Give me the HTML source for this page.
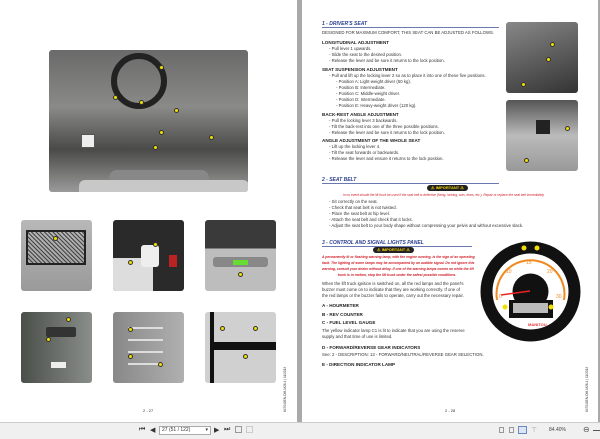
<!DOCTYPE html>
<html><head><meta charset="utf-8"><style>
*{margin:0;padding:0;box-sizing:border-box}
body{width:600px;height:439px;background:#a9a9a9;position:relative;overflow:hidden;font-family:"Liberation Sans",sans-serif}
.pg{position:absolute;background:#fff;top:0;height:422px}
.a{position:absolute;white-space:nowrap}
.ph{position:absolute;border-radius:3px;overflow:hidden}
.t{position:absolute;font-size:4.3px;color:#333;white-space:nowrap}
.h{position:absolute;font-size:4.6px;font-weight:bold;color:#222;white-space:nowrap}
.sec{position:absolute;font-size:5px;font-weight:bold;font-style:italic;color:#2b3f8f;white-space:nowrap}
.red{position:absolute;font-size:3.4px;color:#d0202a;font-style:italic;white-space:nowrap;text-align:center}
.imp{position:absolute;background:#222;color:#f5d000;font-size:4px;font-weight:bold;border-radius:3px;padding:0 4px;height:6px;line-height:6px}
.dot{position:absolute;width:5px;height:5px;border-radius:50%;background:#f3e000;border:1px solid #333}
.tb{position:absolute;top:422px;left:0;width:600px;height:17px;background:#f0f0f0;border-top:1px solid #ccc}
</style></head><body>
<div class="pg" style="left:0;width:297px"></div>
<div class="pg" style="left:302px;width:296px"></div>

<div class="ph" style="left:49px;top:50px;width:199px;height:142px;background:linear-gradient(180deg,#6a6a6a 0%,#8a8a88 40%,#4a4a48 70%,#9a9a9a 100%)">
 <div class="a" style="left:62px;top:3px;width:56px;height:56px;border-radius:50%;border:6px solid #222"></div>
 <div class="a" style="left:60px;top:120px;width:100px;height:30px;background:#888;border-radius:8px"></div>
 <div class="a" style="left:30px;top:130px;width:170px;height:20px;background:#c8c8c8;border-radius:6px"></div>
 <div class="a" style="left:32px;top:84px;width:14px;height:14px;background:#eee;border:1px solid #555"></div>
 <div class="dot" style="left:110px;top:15px"></div><div class="dot" style="left:90px;top:50px"></div><div class="dot" style="left:125px;top:58px"></div><div class="dot" style="left:160px;top:85px"></div><div class="dot" style="left:104px;top:95px"></div><div class="dot" style="left:64px;top:45px"></div><div class="dot" style="left:110px;top:80px"></div>
</div>
<div class="ph" style="left:21px;top:220px;width:71px;height:71px;background:linear-gradient(#b8b8b8,#9a9a9a)"><div class="a" style="left:5px;top:10px;width:60px;height:35px;border:2px solid #222;background:repeating-linear-gradient(45deg,#444 0 1px,transparent 1px 3px)"></div><div class="dot" style="left:32px;top:16px"></div></div>
<div class="ph" style="left:113px;top:220px;width:71px;height:71px;background:#2a2a2a"><div class="a" style="left:0;top:38px;width:40px;height:33px;background:#ddd"></div><div class="a" style="left:28px;top:25px;width:18px;height:22px;background:#eee;border-radius:3px"></div><div class="a" style="left:56px;top:35px;width:8px;height:12px;background:#b22"></div><div class="dot" style="left:40px;top:22px"></div><div class="dot" style="left:15px;top:40px"></div></div>
<div class="ph" style="left:205px;top:220px;width:71px;height:71px;background:linear-gradient(#3a3a3a 0 40%,#bdbdbd 40%)"><div class="a" style="left:8px;top:37px;width:55px;height:10px;background:#888;border-radius:3px"></div><div class="a" style="left:28px;top:40px;width:15px;height:5px;background:#6d3"></div><div class="dot" style="left:33px;top:52px"></div></div>
<div class="ph" style="left:21px;top:312px;width:71px;height:71px;background:linear-gradient(90deg,#4a4f4a,#8a8e8a)"><div class="a" style="left:25px;top:15px;width:30px;height:10px;background:#333;border-radius:2px"></div><div class="a" style="left:30px;top:50px;width:15px;height:6px;background:#eee"></div><div class="dot" style="left:45px;top:5px"></div><div class="dot" style="left:25px;top:25px"></div></div>
<div class="ph" style="left:113px;top:312px;width:71px;height:71px;background:linear-gradient(90deg,#888,#b0b0b0)"><div class="a" style="left:15px;top:15px;width:35px;height:2px;background:#ddd;box-shadow:0 12px #ddd,0 24px #ddd,0 36px #ddd"></div><div class="dot" style="left:15px;top:15px"></div><div class="dot" style="left:15px;top:42px"></div><div class="dot" style="left:45px;top:50px"></div></div>
<div class="ph" style="left:205px;top:312px;width:71px;height:71px;background:#d0d0d0"><div class="a" style="left:5px;top:0;width:4px;height:71px;background:#111"></div><div class="a" style="left:5px;top:30px;width:66px;height:8px;background:#111"></div><div class="dot" style="left:15px;top:14px"></div><div class="dot" style="left:48px;top:14px"></div><div class="dot" style="left:38px;top:42px"></div></div>
<div class="t" style="left:143px;top:408px;font-size:4px">2 - 27</div>
<div class="t" style="left:283px;top:412px;font-size:3.2px;transform:rotate(-90deg);transform-origin:0 0">647040EN-OM-M26-4 | 11/2019</div>

<div class="sec" style="left:322px;top:21px">1 - DRIVER'S SEAT</div>
<div class="a" style="left:322px;top:27px;width:177px;height:1px;background:#6a7ab0"></div>
<div class="t" style="left:322px;top:30px">DESIGNED FOR MAXIMUM COMFORT, THIS SEAT CAN BE ADJUSTED AS FOLLOWS.</div>
<div class="h" style="left:322px;top:40px">LONGITUDINAL ADJUSTMENT</div>
<div class="t" style="left:329px;top:46px">- Pull lever 1 upwards.</div>
<div class="t" style="left:329px;top:52px">- Slide the seat to the desired position.</div>
<div class="t" style="left:329px;top:58px">- Release the lever and be sure it returns to the lock position.</div>
<div class="h" style="left:322px;top:67px">SEAT SUSPENSION ADJUSTMENT</div>
<div class="t" style="left:329px;top:73px">- Pull and lift up the locking lever 2 so as to place it into one of these five positions.</div>
<div class="t" style="left:336px;top:79px">- Position A: Light-weight driver (50 kg).</div>
<div class="t" style="left:336px;top:85px">- Position B: Intermediate.</div>
<div class="t" style="left:336px;top:91px">- Position C: Middle-weight driver.</div>
<div class="t" style="left:336px;top:97px">- Position D: Intermediate.</div>
<div class="t" style="left:336px;top:103px">- Position E: Heavy-weight driver (120 kg).</div>
<div class="h" style="left:322px;top:112px">BACK-REST ANGLE ADJUSTMENT</div>
<div class="t" style="left:329px;top:118px">- Pull the locking lever 3 backwards.</div>
<div class="t" style="left:329px;top:124px">- Tilt the back-rest into one of the three possible positions.</div>
<div class="t" style="left:329px;top:130px">- Release the lever and be sure it returns to the lock position.</div>
<div class="h" style="left:322px;top:138px">ANGLE ADJUSTMENT OF THE WHOLE SEAT</div>
<div class="t" style="left:329px;top:144px">- Lift up the locking lever 4.</div>
<div class="t" style="left:329px;top:150px">- Tilt the seat forwards or backwards.</div>
<div class="t" style="left:329px;top:156px">- Release the lever and ensure it returns to the lock position.</div>
<div class="ph" style="left:506px;top:22px;width:72px;height:71px;background:linear-gradient(160deg,#888,#555 60%,#333)"><div class="dot" style="left:44px;top:20px"></div><div class="dot" style="left:40px;top:35px"></div><div class="dot" style="left:15px;top:60px"></div></div>
<div class="ph" style="left:506px;top:100px;width:72px;height:71px;background:linear-gradient(180deg,#555,#bbb 50%,#999)"><div class="a" style="left:30px;top:20px;width:14px;height:14px;background:#222"></div><div class="dot" style="left:59px;top:26px"></div><div class="dot" style="left:18px;top:58px"></div></div>

<div class="sec" style="left:322px;top:177px">2 - SEAT BELT</div>
<div class="a" style="left:322px;top:183px;width:177px;height:1px;background:#6a7ab0"></div>
<div class="imp" style="left:427px;top:185px">⚠ IMPORTANT ⚠</div>
<div class="red" style="left:343px;top:193px;font-size:3.2px">In no event should the lift truck be used if the seat belt is defective (fixing, locking, cuts, tears, etc.). Repair or replace the seat belt immediately.</div>
<div class="t" style="left:329px;top:199px">- Sit correctly on the seat.</div>
<div class="t" style="left:329px;top:205px">- Check that seat belt is not twisted.</div>
<div class="t" style="left:329px;top:211px">- Place the seat belt at hip level.</div>
<div class="t" style="left:329px;top:217px">- Attach the seat belt and check that it locks.</div>
<div class="t" style="left:329px;top:223px">- Adjust the seat belt to your body shape without compressing your pelvis and without excessive slack.</div>

<div class="sec" style="left:322px;top:240px">3 - CONTROL AND SIGNAL LIGHTS PANEL</div>
<div class="a" style="left:322px;top:246px;width:150px;height:1px;background:#6a7ab0"></div>
<div class="imp" style="left:373px;top:247px">⚠ IMPORTANT ⚠</div>
<div class="red" style="left:322px;top:255px;width:150px;font-weight:bold">A permanently lit or flashing warning lamp, with the engine running, is the sign of an operating</div>
<div class="red" style="left:322px;top:261px;width:150px;font-weight:bold">fault. The lighting of some lamps may be accompanied by an audible signal. Do not ignore this</div>
<div class="red" style="left:322px;top:267px;width:150px;font-weight:bold">warning, consult your dealer without delay. If one of the warning lamps comes on while the lift</div>
<div class="red" style="left:322px;top:273px;width:150px;font-weight:bold">truck is in motion, stop the lift truck under the safest possible conditions.</div>
<div class="t" style="left:322px;top:281px">When the lift truck ignition is switched on, all the red lamps and the panel's</div>
<div class="t" style="left:322px;top:287px">buzzer must come on to indicate that they are working correctly. If one of</div>
<div class="t" style="left:322px;top:293px">the red lamps or the buzzer fails to operate, carry out the necessary repair.</div>
<div class="h" style="left:322px;top:303px">A - HOURMETER</div>
<div class="h" style="left:322px;top:312px">B - REV COUNTER</div>
<div class="h" style="left:322px;top:320px">C - FUEL LEVEL GAUGE</div>
<div class="t" style="left:322px;top:328px">The yellow indicator lamp C1 is lit to indicate that you are using the reserve</div>
<div class="t" style="left:322px;top:334px">supply and that time of use is limited.</div>
<div class="h" style="left:322px;top:345px">D - FORWARD/REVERSE GEAR INDICATORS</div>
<div class="t" style="left:322px;top:352px">See: 2 - DESCRIPTION: 13 - FORWARD/NEUTRAL/REVERSE GEAR SELECTION.</div>
<div class="h" style="left:322px;top:362px">E - DIRECTION INDICATOR LAMP</div>

<svg class="a" style="left:479px;top:240px" width="103" height="103" viewBox="0 0 103 103">
<circle cx="51.5" cy="51.5" r="50" fill="#111"/>
<circle cx="51.5" cy="51.5" r="38" fill="#fff"/>
<path d="M18 60 A34 34 0 1 1 85 60" fill="none" stroke="#f08a20" stroke-width="2"/>
<circle cx="51.5" cy="51.5" r="18" fill="#111"/>
<rect x="30" y="60" width="44" height="18" fill="#111"/>
<rect x="34" y="63" width="35" height="10" fill="#bbb"/>
<text x="49" y="86" font-size="4" fill="#e33" font-family="Liberation Sans" font-weight="bold">MANITOU</text>
<line x1="51" y1="51" x2="22" y2="55" stroke="#e22" stroke-width="1.5"/>
<text x="20" y="58" font-size="5" fill="#f08a20" font-family="Liberation Sans">0</text>
<text x="27" y="33" font-size="5" fill="#f08a20" font-family="Liberation Sans">10</text>
<text x="47" y="24" font-size="5" fill="#f08a20" font-family="Liberation Sans">15</text>
<text x="68" y="33" font-size="5" fill="#f08a20" font-family="Liberation Sans">20</text>
<text x="77" y="58" font-size="5" fill="#f08a20" font-family="Liberation Sans">30</text>
<circle cx="45" cy="8" r="2.5" fill="#f3e000"/><circle cx="58" cy="8" r="2.5" fill="#f3e000"/>
<circle cx="72" cy="67" r="2.5" fill="#f3e000"/><circle cx="26" cy="67" r="2.5" fill="#f3e000"/>
</svg>
<div class="t" style="left:445px;top:408px;font-size:4px">2 - 28</div>
<div class="t" style="left:585px;top:412px;font-size:3.2px;transform:rotate(-90deg);transform-origin:0 0">647040EN-OM-M26-4 | 11/2019</div>

<div class="tb">
 <div class="a" style="left:139px;top:3px;font-size:7px;color:#333">⏮</div>
 <div class="a" style="left:150px;top:3px;font-size:7px;color:#333">◀</div>
 <div class="a" style="left:159px;top:3px;width:52px;height:9px;background:#fff;border:1px solid #aaa;font-size:5px;line-height:7px;padding-left:2px;color:#333">27 (51 / 122)<span style="position:absolute;right:2px">▾</span></div>
 <div class="a" style="left:214px;top:3px;font-size:7px;color:#333">▶</div>
 <div class="a" style="left:224px;top:3px;font-size:7px;color:#333">⏭</div>
 <div class="a" style="left:235px;top:3px;width:7px;height:7px;border:1px solid #999"></div>
 <div class="a" style="left:246px;top:3px;width:7px;height:7px;border:1px solid #ccc"></div>
 <div class="a" style="left:499px;top:4px;width:5px;height:6px;border:1px solid #999"></div>
 <div class="a" style="left:509px;top:4px;width:5px;height:6px;border:1px solid #999"></div>
 <div class="a" style="left:518px;top:3px;width:9px;height:8px;border:1px solid #6a8ac0;background:#dde6f5"></div>
 <div class="a" style="left:531px;top:3px;font-size:7px;color:#999">⊤</div>
 <div class="a" style="left:549px;top:4px;font-size:5px;color:#444">84.40%</div>
 <div class="a" style="left:583px;top:2px;font-size:8px;color:#555">⊖</div>
 <div class="a" style="left:593px;top:7px;width:7px;height:1px;background:#555"></div>
</div>
</body></html>
